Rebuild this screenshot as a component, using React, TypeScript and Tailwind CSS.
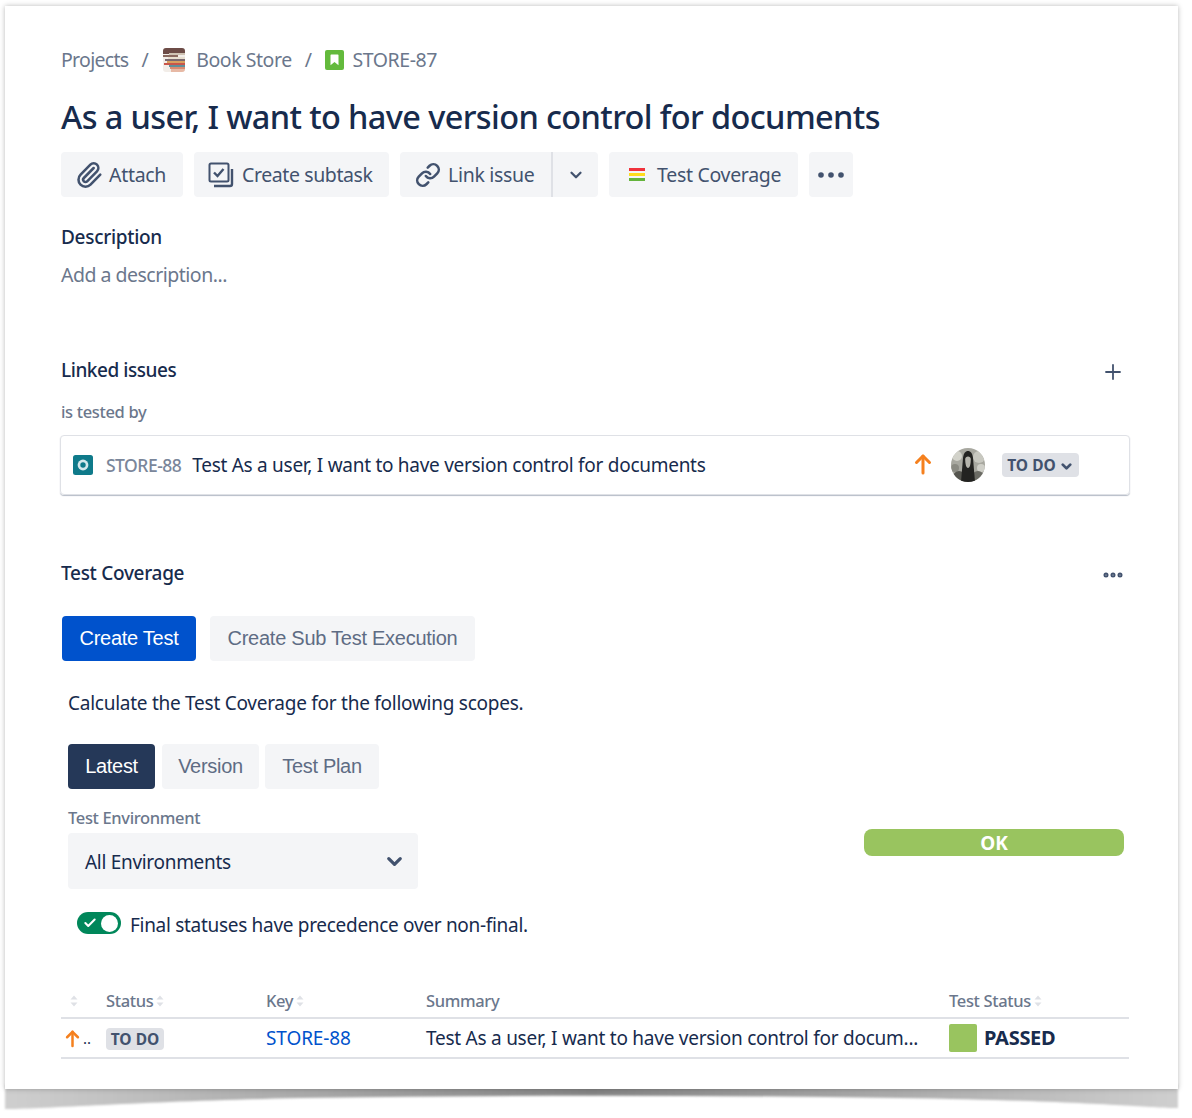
import { ChevronDown, Plus, Ellipsis, Check, Paperclip, Link } from "lucide-react";

const font = "font-['Noto_Sans','Open_Sans',sans-serif]";
const arial = "font-['Liberation_Sans',Arial,sans-serif]";

function SortIcon({ className = "" }: { className?: string }) {
  return (
    <svg viewBox="0 0 8 12" className={`w-[8px] h-[12px] ${className}`}>
      <path d="M4 0.5 7.5 4.5H0.5Z M4 11.5 0.5 7.5H7.5Z" fill="#dfe1e6" />
    </svg>
  );
}

function PriorityArrow({ className = "" }: { className?: string }) {
  return (
    <svg viewBox="0 0 18 22" className={className} fill="none" stroke="#f5801e" strokeWidth="3" strokeLinecap="round" strokeLinejoin="round">
      <path d="M9 20V3" />
      <path d="M2.500 9.500 9 3l6.500 6.500" />
    </svg>
  );
}

function BookIcon() {
  return (
    <svg viewBox="0 0 22 24" className="w-[22px] h-[24px] rounded-[3px]">
      <rect width="22" height="24" fill="#f2ede8" />
      <rect width="22" height="6" fill="#6d4c47" />
      <rect x="6" y="5" width="16" height="2" fill="#cfc3b4" />
      <rect y="7" width="15" height="2" fill="#8a6a60" />
      <rect x="5" y="9" width="17" height="2" fill="#e8dfd0" />
      <rect x="2" y="11" width="20" height="2" fill="#7b6a70" />
      <rect x="4" y="13" width="18" height="2" fill="#d9a05f" />
      <rect x="1" y="15" width="21" height="2" fill="#c9564a" />
      <rect x="6" y="17" width="16" height="2" fill="#5f8f9a" />
      <rect x="7" y="19" width="15" height="2" fill="#d98a70" />
      <rect x="8" y="21" width="14" height="3" fill="#e7b9a5" />
    </svg>
  );
}

function StoryIcon() {
  return (
    <svg viewBox="0 0 19 20" className="w-[19px] h-[20px]">
      <rect width="19" height="20" rx="2" fill="#63ba3c" />
      <path d="M6.2 4.5h6.6a.7.7 0 0 1 .7.7v10L9.5 12l-4 3.2v-10a.7.7 0 0 1 .7-.7Z" fill="#fff" />
    </svg>
  );
}

function TestIcon() {
  return (
    <svg viewBox="0 0 20 20" className="w-[20px] h-[20px]">
      <rect width="20" height="20" rx="2.5" fill="#0f7a8a" />
      <circle cx="10" cy="10" r="5.4" fill="#d4e8ec" />
      <circle cx="10" cy="10" r="2.7" fill="#0f7a8a" />
    </svg>
  );
}

function SubtaskIcon() {
  return (
    <svg viewBox="0 0 26 26" className="w-[26px] h-[26px]" fill="none" stroke="#42526e" strokeWidth="2">
      <rect x="1.5" y="1.5" width="19" height="18" rx="1.5" />
      <path d="M6 10.5 9.5 14l6-7" strokeWidth="2.4" />
      <path d="M24 7v15a2 2 0 0 1-2 2H6" strokeWidth="2.4" />
    </svg>
  );
}

function CoverageIcon() {
  return (
    <div className="flex flex-col gap-[2px] w-[16px]">
      <div className="h-[3px] bg-[#f0323c]" />
      <div className="h-[3px] bg-[#ffdc1e]" />
      <div className="h-[3px] bg-[#64b43c]" />
    </div>
  );
}

function Avatar() {
  return (
    <svg viewBox="0 0 34 34" className="w-[34px] h-[34px] rounded-full">
      <rect width="34" height="34" fill="#a8a8a0" />
      <circle cx="6" cy="8" r="5" fill="#d2d2ca" />
      <circle cx="28" cy="9" r="6" fill="#c8c8c0" />
      <circle cx="4" cy="20" r="4" fill="#8a8a82" />
      <circle cx="30" cy="20" r="4" fill="#cfcfc8" />
      <circle cx="8" cy="29" r="6" fill="#55554f" />
      <circle cx="27" cy="29" r="6" fill="#6b6b64" />
      <path d="M10 34 12 10c.4-4.500 2.500-7 5-7s4.600 2.500 5 7l2 24Z" fill="#232321" />
      <path d="M14.200 11c0-1.500 1.300-2.400 2.800-2.400s2.800.9 2.800 2.400c0 5-1 9-2.800 9s-2.800-4-2.800-9Z" fill="#b5b4ac" />
    </svg>
  );
}

function ActionButton({ children, className = "" }: { children: React.ReactNode; className?: string }) {
  return (
    <div className={`h-[45px] bg-[#f4f5f7] rounded-[4px] flex items-center text-[19.5px] text-[#42526e] ${className}`}>
      {children}
    </div>
  );
}

export default function App() {
  return (
    <div className={`relative w-[1192px] h-[1118px] bg-white overflow-hidden ${font}`}>
      {/* curled shadow under the sheet */}
      <svg viewBox="0 0 1192 1118" className="absolute inset-0 w-[1192px] h-[1118px]">
        <defs>
          <linearGradient id="curl" x1="0" x2="1" y1="0" y2="0">
            <stop offset="0" stopColor="#cfcfcf" />
            <stop offset="0.5" stopColor="#858585" />
            <stop offset="1" stopColor="#cfcfcf" />
          </linearGradient>
          <filter id="soft"><feGaussianBlur stdDeviation="1.2" /></filter>
        </defs>
        <path d="M5 1085H1178V1108C1160 1109 1100 1101 900 1098C700 1095 500 1095 300 1098C150 1101 40 1109 5 1109Z" fill="url(#curl)" filter="url(#soft)" />
      </svg>

      <div className="relative ml-[5px] mt-[6px] w-[1173px] h-[1083px] bg-white shadow-[0_0_5px_rgba(0,0,0,0.28)] pl-[56px] pr-[49px] flex flex-col">
        {/* breadcrumb */}
        <div className="mt-[39px] h-[30px] flex items-center text-[19.5px] text-[#6b778c] tracking-[-0.45px]">
          <span className="tracking-[-0.7px]">Projects</span>
          <span className="ml-[13px]">/</span>
          <span className="ml-[15px]"><BookIcon /></span>
          <span className="ml-[11px]">Book Store</span>
          <span className="ml-[13px]">/</span>
          <span className="ml-[13px]"><StoryIcon /></span>
          <span className="ml-[9px]">STORE-87</span>
        </div>

        {/* title */}
        <h1 className="mt-[18px] h-[48px] flex items-center text-[32.5px] font-medium text-[#172b4d] tracking-[-0.62px] whitespace-nowrap">
          As a user, I want to have version control for documents
        </h1>

        {/* actions */}
        <div className="mt-[11px] flex tracking-[-0.3px]">
          <ActionButton className="w-[122px] pl-[14px] gap-[6px]">
            <Paperclip size={28} strokeWidth={2.2} />
            <span>Attach</span>
          </ActionButton>
          <ActionButton className="ml-[11px] w-[195px] pl-[14px] gap-[8px] tracking-[-0.4px]">
            <SubtaskIcon />
            <span>Create subtask</span>
          </ActionButton>
          <ActionButton className="ml-[11px] w-[151px] pl-[15px] gap-[7px] rounded-r-none">
            <Link size={26} strokeWidth={2.4} />
            <span>Link issue</span>
          </ActionButton>
          <div className="w-[2px] h-[45px] bg-[#dfe1e6]" />
          <ActionButton className="w-[45px] justify-center rounded-l-none">
            <ChevronDown size={18} strokeWidth={3} />
          </ActionButton>
          <ActionButton className="ml-[11px] w-[189px] pl-[20px] gap-[12px]">
            <CoverageIcon />
            <span>Test Coverage</span>
          </ActionButton>
          <ActionButton className="ml-[11px] w-[44px] justify-center">
            <svg viewBox="0 0 26 6" className="w-[26px] h-[6px]" fill="#42526e">
              <circle cx="3" cy="3" r="2.800" />
              <circle cx="13" cy="3" r="2.800" />
              <circle cx="23" cy="3" r="2.800" />
            </svg>
          </ActionButton>
        </div>

        {/* description */}
        <h2 className="mt-[26px] h-[28px] flex items-center text-[19px] font-medium text-[#172b4d] tracking-[-0.3px]">Description</h2>
        <div className="mt-[10px] h-[28px] flex items-center text-[19.5px] text-[#6b778c] tracking-[-0.5px]">Add a description...</div>

        {/* linked issues */}
        <div className="mt-[64px] h-[34px] flex items-center justify-between">
          <h2 className="text-[19px] font-medium text-[#172b4d] tracking-[-0.45px]">Linked issues</h2>
          <Plus size={24} strokeWidth={1.8} className="text-[#42526e] mt-[4px] mr-[4px]" />
        </div>
        <div className="mt-[13px] h-[24px] flex items-center text-[16.5px] font-medium text-[#6b778c] tracking-[-0.35px]">is tested by</div>
        <div className="mt-[11px] -ml-[1px] -mr-[1px] h-[60px] rounded-[4px] border border-[#dfe1e6] shadow-[0_1px_1px_rgba(9,30,66,0.3)] flex items-center pl-[12px] text-[19px]">
          <TestIcon />
          <span className="ml-[13px] font-medium text-[#7a869a] text-[17.5px] tracking-[-0.5px]">STORE-88</span>
          <span className="ml-[11px] text-[#172b4d] tracking-[-0.28px]">Test As a user, I want to have version control for documents</span>
          <div className="ml-auto flex items-center mr-[50px]">
            <PriorityArrow className="w-[18px] h-[22px] -mt-[2px]" />
            <span className="ml-[19px]"><Avatar /></span>
            <span className="ml-[17px] h-[24px] w-[77px] rounded-[4px] bg-[#dfe1e6] flex items-center justify-center gap-[3px] pt-[2px] text-[15.5px] font-bold text-[#42526e]">
              TO DO <ChevronDown size={15} strokeWidth={4.5} />
            </span>
          </div>
        </div>

        {/* test coverage */}
        <div className="mt-[61px] h-[34px] flex items-center justify-between">
          <h2 className="text-[19px] font-medium text-[#172b4d] tracking-[-0.3px]">Test Coverage</h2>
          <Ellipsis size={24} strokeWidth={3} className="text-[#42526e] mt-[3px] mr-[4px]" />
        </div>
        <div className={`mt-[26px] ml-[1px] flex gap-[14px] text-[20px] tracking-[-0.26px] ${arial}`}>
          <div className="h-[45px] w-[134px] pb-[1px] rounded-[4px] bg-[#0052cc] text-white flex items-center justify-center">Create Test</div>
          <div className="h-[45px] w-[265px] pb-[1px] rounded-[4px] bg-[#f4f5f7] text-[#5e6c84] flex items-center justify-center">Create Sub Test Execution</div>
        </div>
        <div className="mt-[28px] ml-[7px] h-[28px] flex items-center text-[19px] text-[#172b4d] tracking-[-0.26px]">
          Calculate the Test Coverage for the following scopes.
        </div>
        <div className={`mt-[27px] ml-[7px] flex text-[20px] tracking-[-0.3px] ${arial}`}>
          <div className="h-[45px] w-[87px] pb-[1px] rounded-[4px] bg-[#253858] text-white flex items-center justify-center">Latest</div>
          <div className="ml-[7px] h-[45px] w-[97px] pb-[1px] rounded-[4px] bg-[#f4f5f7] text-[#5e6c84] flex items-center justify-center">Version</div>
          <div className="ml-[6px] h-[45px] w-[114px] pb-[1px] rounded-[4px] bg-[#f4f5f7] text-[#5e6c84] flex items-center justify-center">Test Plan</div>
        </div>

        <div className="ml-[7px] flex items-start">
          <div className="w-[796px]">
            <div className="mt-[18px] h-[22px] flex items-center text-[16.5px] font-medium text-[#6b778c] tracking-[-0.35px]">Test Environment</div>
            <div className="mt-[4px] h-[56px] w-[350px] rounded-[4px] bg-[#f4f5f7] flex items-center justify-between pl-[17px] pr-[12px] text-[19px] text-[#172b4d] tracking-[-0.3px]">
              <span className="mt-[2px]">All Environments</span>
              <ChevronDown size={23} strokeWidth={3.4} className="text-[#42526e]" />
            </div>
          </div>
          <div className="mt-[40px] w-[260px] h-[27px] pt-[1px] rounded-[8px] bg-[#99c45f] flex items-center justify-center text-[19px] font-bold text-white">OK</div>
        </div>

        {/* toggle */}
        <div className="mt-[22px] ml-[16px] h-[24px] flex items-center">
          <div className="w-[44px] h-[22px] rounded-full bg-[#00875a] flex items-center justify-between pl-[6px] pr-[3px]">
            <Check size={14} strokeWidth={3.5} className="text-white" />
            <div className="w-[17px] h-[17px] rounded-full bg-white" />
          </div>
          <span className="ml-[9px] mt-[4px] text-[19px] text-[#172b4d] tracking-[-0.3px]">Final statuses have precedence over non-final.</span>
        </div>

        {/* table */}
        <div className="mt-[53px] w-[1068px]">
          <div className="grid grid-cols-[45px_160px_160px_523px_1fr] h-[31px] items-center border-b-2 border-[#dfe1e6] text-[16.5px] font-medium text-[#6b778c] tracking-[-0.35px] pb-[3px]">
            <div className="pl-[9px] flex"><SortIcon /></div>
            <div className="flex items-center gap-[3px]">Status <SortIcon /></div>
            <div className="flex items-center gap-[3px]">Key <SortIcon /></div>
            <div>Summary</div>
            <div className="flex items-center gap-[3px]">Test Status <SortIcon /></div>
          </div>
          <div className="grid grid-cols-[45px_160px_160px_523px_1fr] h-[40px] items-center border-b-2 border-[#dfe1e6] text-[19px]">
            <div className="flex items-center text-[#172b4d] text-[15px]">
              <PriorityArrow className="w-[15px] h-[19px] ml-[4px]" />
              <span className="ml-[3px] leading-none">..</span>
            </div>
            <div>
              <span className="inline-flex h-[22px] w-[58px] pt-[1px] items-center justify-center rounded-[4px] bg-[#dfe1e6] text-[15.5px] font-bold text-[#42526e]">TO DO</span>
            </div>
            <div className="text-[#0052cc] tracking-[-0.1px]">STORE-88</div>
            <div className="text-[#172b4d] tracking-[-0.25px] whitespace-nowrap">Test As a user, I want to have version control for docum...</div>
            <div className="flex items-center">
              <div className="w-[28px] h-[28px] rounded-[2px] bg-[#99c45f]" />
              <span className="ml-[7px] font-bold text-[20px] text-[#172b4d] tracking-[-0.3px]">PASSED</span>
            </div>
          </div>
        </div>
      </div>
    </div>
  );
}
